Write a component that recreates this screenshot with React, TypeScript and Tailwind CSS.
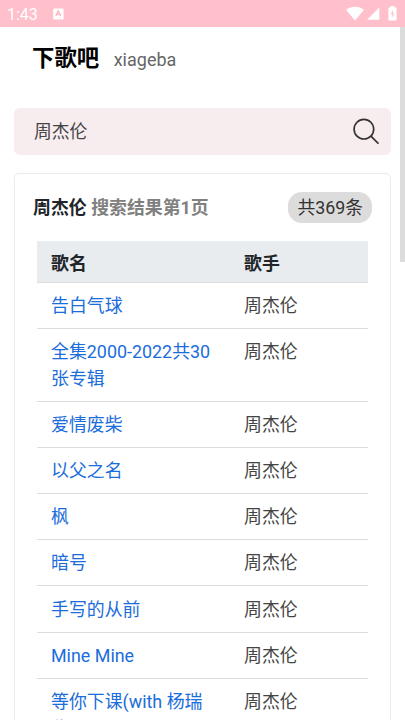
import { clsx } from 'clsx'

const songs = [
  { name: '告白气球', singer: '周杰伦' },
  { name: '全集2000-2022共30张专辑', singer: '周杰伦' },
  { name: '爱情废柴', singer: '周杰伦' },
  { name: '以父之名', singer: '周杰伦' },
  { name: '枫', singer: '周杰伦' },
  { name: '暗号', singer: '周杰伦' },
  { name: '手写的从前', singer: '周杰伦' },
  { name: 'Mine Mine', singer: '周杰伦' },
  { name: '等你下课(with 杨瑞代)', singer: '周杰伦' },
]

function StatusBar() {
  return (
    <div className="flex h-[27px] shrink-0 items-center bg-[#ffc0cb] pl-[7px] pr-[8px] text-white">
      <span className="pt-[2px] text-[16px] leading-[25px]">1:43</span>
      <svg className="ml-[15px]" width="11" height="12" viewBox="0 0 11 12">
        <rect x="0.2" y="0.5" width="10.4" height="11" rx="1.2" fill="#fff" />
        <path d="M2.8 8 5.2 2.8 7.7 8M3.7 6.4h3.2" fill="none" stroke="#ffb3c1" strokeWidth="1.3" />
        <path d="M5 9.8h1M7 9.8h1" stroke="#ffc0cb" strokeWidth="0.8" />
      </svg>
      <div className="ml-auto flex items-center">
        <svg width="18" height="15" viewBox="0 0 18 15">
          <path d="M0 3.7C5 -0.2 13 -0.2 18 3.7L9 14.5Z" fill="#fff" />
        </svg>
        <svg className="ml-[3px]" width="13" height="13" viewBox="0 0 13 13">
          <path d="M12.3 0.6V12.8H0.1Z" fill="#fff" />
        </svg>
        <svg className="ml-[8px]" width="9" height="15" viewBox="0 0 9 15">
          <path d="M2.5 0h4v1.4h1.3q.8 0 .8.8v11.6q0 .8-.8.8H1.2q-.8 0-.8-.8V2.2q0-.8.8-.8h1.3Z" fill="#fff" />
          <path d="M4.9 3.8 2.8 8.3h1.5v3.5l2.1-4.3H4.9Z" fill="#ffc0cb" />
        </svg>
      </div>
    </div>
  )
}

function SearchBox() {
  return (
    <div className="mx-[14px] flex h-[47px] shrink-0 items-center justify-between rounded-[6px] bg-[#f7ecee] pl-[20px] pr-[12px]">
      <span className="pt-[2px] text-[17.8px] text-[#444]">周杰伦</span>
      <svg width="27" height="27" viewBox="0 0 27 27" fill="none" stroke="#333" strokeWidth="1.7">
        <circle cx="11.9" cy="11.2" r="9.8" />
        <path d="M18.9 18.2 26.5 25.7" />
      </svg>
    </div>
  )
}

export default function App() {
  return (
    <div className="relative flex h-[720px] w-[405px] flex-col overflow-hidden bg-white font-['Roboto','Noto_Sans_CJK_SC',sans-serif]">
      <StatusBar />
      <header className="flex h-[81px] shrink-0 items-baseline pl-[32px] pt-[14px]">
        <h1 className="text-[22.4px] leading-[34px] font-bold text-black">下歌吧</h1>
        <span className="ml-[14.5px] text-[18px] text-[#666]">xiageba</span>
      </header>
      <SearchBox />
      <section className="mx-[14px] mt-[18px] h-[700px] shrink-0 rounded-[5px] border border-[#ebebeb] px-[18px] pt-[18px]">
        <div className="flex h-[31px] items-center justify-between">
          <h2 className="pt-px text-[17.9px] font-bold text-[#212529]">
            周杰伦 <span className="text-[#808080]">搜索结果第1页</span>
          </h2>
          <span className="flex h-[31px] items-center rounded-[14px] bg-[#dcdcdc] px-[9px] pt-px text-[17.8px] text-[#333]">
            共369条
          </span>
        </div>
        <table className="ml-[4px] mt-[18px] w-[331px] table-fixed border-collapse text-[17.9px] leading-[26.8px]">
          <thead>
            <tr className="h-[41px] border-b border-[#dcdcdc] bg-[#e8ecef] text-left text-[#212529]">
              <th className="w-[193px] pl-[14px] pt-[6px] font-bold">歌名</th>
              <th className="pl-[14px] pt-[6px] font-bold">歌手</th>
            </tr>
          </thead>
          <tbody>
            {songs.map((song, i) => (
              <tr key={song.name} className={clsx('align-top', i < songs.length - 1 && 'border-b border-[#dcdcdc]')}>
                <td className="px-[14px] pt-[10.2px] pb-[8.2px] text-[#1a6ddb]">{song.name}</td>
                <td className="px-[14px] pt-[10.2px] pb-[8.2px] text-[#444]">{song.singer}</td>
              </tr>
            ))}
          </tbody>
        </table>
      </section>
      <div className="absolute right-0 top-[27px] h-[235px] w-[5px] bg-[#dcdcdc]" />
    </div>
  )
}
